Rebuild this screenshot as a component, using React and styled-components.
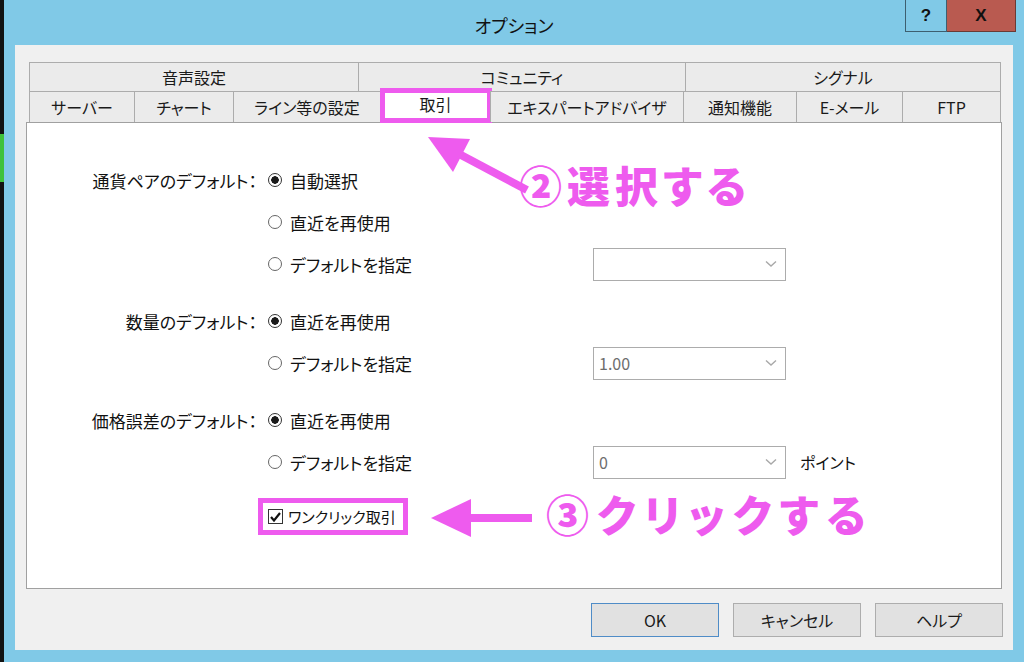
import styled, { createGlobalStyle } from "styled-components";

const MAGENTA = "#ee5bee";

const GlobalStyle = createGlobalStyle`
  html, body {
    margin: 0;
    padding: 0;
  }
  body {
    font-family: "Noto Sans CJK JP", "Noto Sans", sans-serif;
    font-feature-settings: "palt";
    color: #111;
  }
`;

const topTabs = [
  { label: "音声設定", w: 330 },
  { label: "コミュニティ", w: 328 },
  { label: "シグナル", w: 316 },
];

const bottomTabs = [
  { label: "サーバー", w: 106 },
  { label: "チャート", w: 100 },
  { label: "ライン等の設定", w: 148 },
  { label: "取引", w: 111, selected: true },
  { label: "エキスパートアドバイザ", w: 194 },
  { label: "通知機能", w: 114 },
  { label: "E-メール", w: 107 },
  { label: "FTP", w: 99 },
];

const Radio = ({ checked }) => <RadioCircle $checked={checked} />;

const Select = ({ value }) => (
  <SelectBox>
    <span>{value}</span>
    <svg width="12" height="8" viewBox="0 0 12 8">
      <path d="M1 1.5 L6 6 L11 1.5" fill="none" stroke="#a8a8a8" strokeWidth="1.4" />
    </svg>
  </SelectBox>
);

const App = () => {
  return (
    <Page>
      <GlobalStyle />
      <LeftStrip />
      <Window>
        <TitleBar>
          <span />
          <Title>オプション</Title>
          <Caption>
            <HelpButton>?</HelpButton>
            <CloseButton>X</CloseButton>
          </Caption>
        </TitleBar>

        <Body>
          <TabRow $h={29}>
            {topTabs.map((t) => (
              <Tab key={t.label} $w={t.w}>
                {t.label}
              </Tab>
            ))}
          </TabRow>
          <TabRow $h={31}>
            {bottomTabs.map((t) => (
              <Tab key={t.label} $w={t.w} $selected={t.selected}>
                {t.label}
              </Tab>
            ))}
          </TabRow>

          <Content>
            <FormRow>
              <Label>通貨ペアのデフォルト：</Label>
              <Choice>
                <Radio checked />
                自動選択
              </Choice>
            </FormRow>
            <FormRow>
              <span />
              <Choice>
                <Radio />
                直近を再使用
              </Choice>
            </FormRow>
            <FormRow>
              <span />
              <Choice>
                <Radio />
                デフォルトを指定
              </Choice>
              <Select value="" />
            </FormRow>

            <FormRow $gap>
              <Label>数量のデフォルト：</Label>
              <Choice>
                <Radio checked />
                直近を再使用
              </Choice>
            </FormRow>
            <FormRow>
              <span />
              <Choice>
                <Radio />
                デフォルトを指定
              </Choice>
              <Select value="1.00" />
            </FormRow>

            <FormRow $gap>
              <Label>価格誤差のデフォルト：</Label>
              <Choice>
                <Radio checked />
                直近を再使用
              </Choice>
            </FormRow>
            <FormRow>
              <span />
              <Choice>
                <Radio />
                デフォルトを指定
              </Choice>
              <Select value="0" />
              <Unit>ポイント</Unit>
            </FormRow>

            <CheckRow>
              <span />
              <Highlight>
                <CheckBox>
                  <svg width="11" height="10" viewBox="0 0 11 10">
                    <path d="M1 5 L4 8.5 L10 1" fill="none" stroke="#111" strokeWidth="2.2" />
                  </svg>
                </CheckBox>
                ワンクリック取引
              </Highlight>
            </CheckRow>
          </Content>

          <ButtonRow>
            <Button $default>OK</Button>
            <Button>キャンセル</Button>
            <Button>ヘルプ</Button>
          </ButtonRow>
        </Body>
      </Window>

      <Arrows width="1024" height="662" viewBox="0 0 1024 662">
        <line x1="461" y1="155" x2="527" y2="190" stroke={MAGENTA} strokeWidth="8" />
        <polygon points="428,137 470,139 453,172" fill={MAGENTA} />
        <line x1="466" y1="518" x2="532" y2="518" stroke={MAGENTA} strokeWidth="8" />
        <polygon points="431,518 471,499 471,537" fill={MAGENTA} />
      </Arrows>
      <Note $x={519} $y={159} $spacing={5}>②選択する</Note>
      <Note $x={546} $y={488} $spacing={8}>③クリックする</Note>
    </Page>
  );
};

export default App;

const Page = styled.div`
  position: relative;
  display: flex;
  width: 1024px;
  height: 662px;
  overflow: hidden;
`;

const LeftStrip = styled.div`
  width: 4px;
  flex-shrink: 0;
  background: linear-gradient(
    to bottom,
    #121212 0 134px,
    #3fc23a 134px 182px,
    #121212 182px
  );
`;

const Window = styled.div`
  flex: 1;
  display: flex;
  flex-direction: column;
  background: #80c9e7;
`;

const TitleBar = styled.div`
  height: 45px;
  display: grid;
  grid-template-columns: 1fr auto 1fr;
  align-items: center;
`;

const Title = styled.div`
  font-size: 18px;
  color: #111;
  padding-top: 4px;
`;

const Caption = styled.div`
  justify-self: end;
  align-self: start;
  display: flex;
  margin-right: 8px;
`;

const HelpButton = styled.div`
  width: 40px;
  height: 31px;
  border: 1px solid #3d5f70;
  border-top: none;
  background: #80c9e7;
  display: flex;
  align-items: center;
  justify-content: center;
  font-family: "Liberation Sans", sans-serif;
  font-weight: bold;
  font-size: 17px;
`;

const CloseButton = styled(HelpButton)`
  width: 68px;
  border-left: none;
  background: #b95a50;
  border-color: #6a3a35;
`;

const Body = styled.div`
  flex: 1;
  margin: 0 11px 12px 11px;
  padding: 17px 11px 13px 11px;
  background: #f0f0f0;
  display: flex;
  flex-direction: column;
`;

const TabRow = styled.div`
  display: flex;
  height: ${(p) => p.$h}px;
  margin: 0 2px 0 3px;
`;

const Tab = styled.div`
  position: relative;
  box-sizing: border-box;
  width: ${(p) => p.$w}px;
  flex-shrink: 0;
  border: 1px solid #acacac;
  border-bottom: none;
  margin-right: -1px;
  background: ${(p) => (p.$selected ? "#ffffff" : "#ebebeb")};
  display: flex;
  align-items: center;
  justify-content: center;
  font-size: 16px;
  color: #1a1a1a;
  padding-bottom: ${(p) => (p.$selected ? "6px" : "0")};

  &::after {
    content: "";
    display: ${(p) => (p.$selected ? "block" : "none")};
    position: absolute;
    inset: -4px -2px -1px -1px;
    border: 5px solid ${MAGENTA};
  }
`;

const Content = styled.div`
  flex: 1;
  background: #ffffff;
  border: 1px solid #a0a0a0;
  padding-top: 36px;
`;

const FormRow = styled.div`
  display: grid;
  grid-template-columns: 230px 336px 193px auto;
  align-items: center;
  height: 42px;
  margin-top: ${(p) => (p.$gap ? "15px" : "0")};
  font-size: 17px;
`;

const Label = styled.div`
  text-align: right;
`;

const Choice = styled.div`
  display: flex;
  align-items: center;
  gap: 8px;
  padding-left: 11px;
`;

const RadioCircle = styled.span`
  box-sizing: border-box;
  width: 14px;
  height: 14px;
  border-radius: 50%;
  border: 1px solid ${(p) => (p.$checked ? "#333" : "#666")};
  background: ${(p) =>
    p.$checked ? "radial-gradient(circle, #1a1a1a 0 3.5px, #fff 4px)" : "#fff"};
`;

const SelectBox = styled.div`
  box-sizing: border-box;
  height: 33px;
  border: 1px solid #acacac;
  background: #fff;
  display: flex;
  align-items: center;
  justify-content: space-between;
  padding: 0 8px 0 5px;
  color: #6d6d6d;
  font-size: 16px;
`;

const Unit = styled.div`
  padding-left: 14px;
  font-size: 16px;
`;

const CheckRow = styled(FormRow)`
  height: 37px;
  margin-top: 15px;
`;

const Highlight = styled.div`
  justify-self: start;
  box-sizing: border-box;
  height: 37px;
  margin-left: 1px;
  border: 5px solid ${MAGENTA};
  padding: 0 7px 0 5px;
  display: flex;
  align-items: center;
  gap: 5px;
  font-size: 15px;
`;

const CheckBox = styled.span`
  box-sizing: border-box;
  width: 15px;
  height: 15px;
  border: 1px solid #333;
  background: #fff;
  display: flex;
  align-items: center;
  justify-content: center;
`;

const ButtonRow = styled.div`
  display: flex;
  justify-content: flex-end;
  gap: 14px;
  margin: 14px -1px 0 0;
`;

const Button = styled.div`
  box-sizing: border-box;
  width: 128px;
  height: 34px;
  background: #e1e1e1;
  border: 1px solid ${(p) => (p.$default ? "#4f8cc7" : "#adadad")};
  display: flex;
  align-items: center;
  justify-content: center;
  font-size: 16px;
  color: #1a1a1a;
`;

const Arrows = styled.svg`
  position: absolute;
  left: 0;
  top: 0;
  pointer-events: none;
`;

const Note = styled.div`
  position: absolute;
  left: ${(p) => p.$x}px;
  top: ${(p) => p.$y}px;
  font-size: 43px;
  font-weight: 900;
  line-height: 1.2;
  letter-spacing: ${(p) => p.$spacing}px;
  color: ${MAGENTA};
  white-space: nowrap;
`;
